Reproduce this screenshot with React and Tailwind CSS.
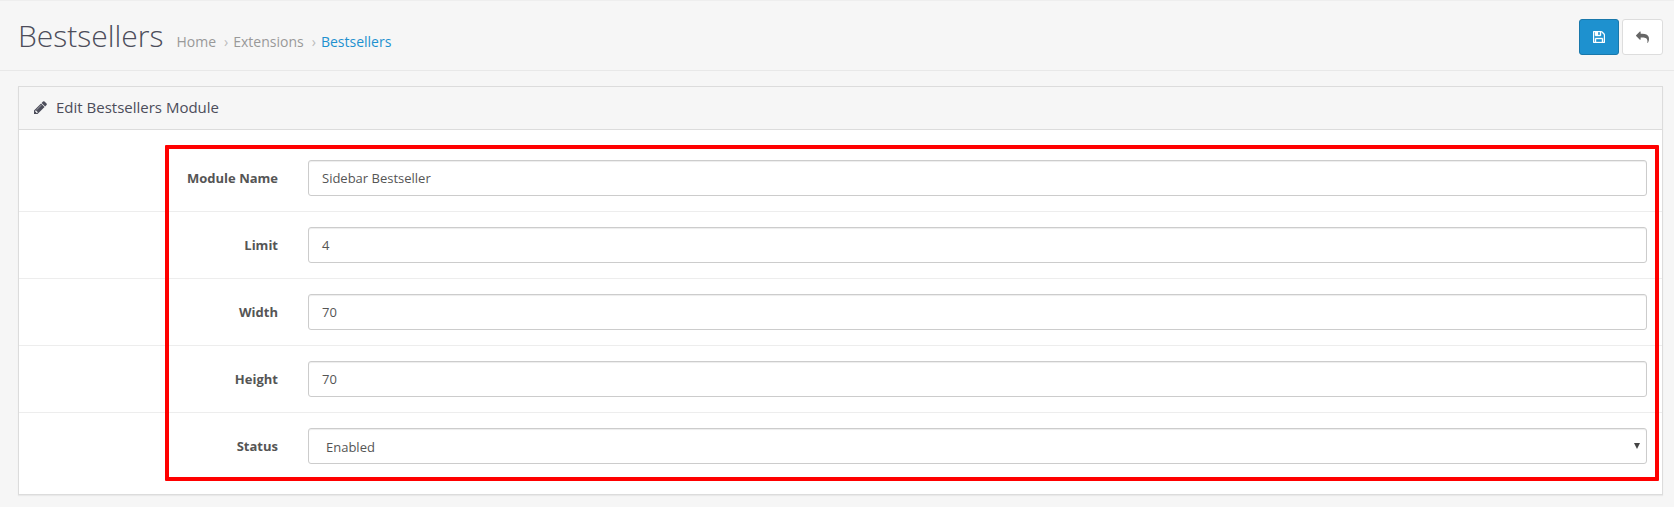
import React from "react";

const rows = [
  { label: "Module Name", value: "Sidebar Bestseller" },
  { label: "Limit", value: "4" },
  { label: "Width", value: "70" },
  { label: "Height", value: "70" },
  { label: "Status", value: "Enabled", select: true },
];

function SaveIcon() {
  return (
    <svg
      className="h-3 w-3"
      viewBox="0 128 1536 1536"
      fill="currentColor"
      stroke="currentColor"
      strokeWidth="50"
    >
      <path d="M384 1536h768v-384h-768v384zM1280 1536h128v-896q0-14-10-38.500t-20-34.500l-281-281q-10-10-34-20t-39-10v416q0 40-28 68t-68 28h-576q-40 0-68-28t-28-68v-416h-128v1280h128v-416q0-40 28-68t68-28h832q40 0 68 28t28 68v416zM896 608v-320q0-13-9.500-22.500t-22.500-9.500h-192q-13 0-22.500 9.500t-9.500 22.500v320q0 13 9.500 22.500t22.500 9.500h192q13 0 22.500-9.500t9.500-22.500zM1536 640v928q0 40-28 68t-68 28h-1344q-40 0-68-28t-28-68v-1344q0-40 28-68t68-28h928q40 0 88 20t76 48l280 280q28 28 48 76t20 88z" />
    </svg>
  );
}

function ReplyIcon() {
  return (
    <svg className="h-[13px] w-[13px] -scale-x-100" viewBox="0 0 1792 1792" fill="currentColor">
      <path d="M1792 640q0 26-19 45l-512 512q-19 19-45 19t-45-19-19-45v-256h-224q-98 0-175.500 6t-154 21.500-133 42.500-105.500 69.500-80 101-48.500 138.500-17.500 181q0 55 5 123 0 6 2.500 23.500t2.500 26.500q0 15-8.500 25t-23.500 10q-16 0-28-17-7-9-13-22t-13.500-30-10.500-24q-127-285-127-451 0-199 53-333 162-403 875-403h224v-256q0-26 19-45t45-19 45 19l512 512q19 19 19 45z" />
    </svg>
  );
}

function PencilIcon() {
  return (
    <svg className="mb-px h-[13px] w-[13px]" viewBox="0 128 1536 1536" fill="currentColor">
      <path d="M363 1536l91-91-235-235-91 91v107h128v128h107zM886 608q0-22-22-22-10 0-17 7l-542 542q-7 7-7 17 0 22 22 22 10 0 17-7l542-542q7-7 7-17zM832 416l416 416-832 832h-416v-416zM1515 512q0 53-37 90l-166 166-416-416 166-165q36-38 90-38 53 0 91 38l235 234q37 39 37 91z" />
    </svg>
  );
}

export default function App() {
  return (
    <div className="relative h-[507px] w-[1674px] overflow-hidden border-t border-[#eeeeee] bg-[#f6f6f6] font-['Open_Sans',sans-serif] text-[13px] text-[#555555]">
      <header className="flex h-[70px] items-start justify-between border-b border-[#e8e8e8] pr-[11px] pl-[18px]">
        <div className="flex items-baseline pt-[13px]">
          <h1 className="text-[30px] leading-[44px] font-light text-[#4c4d5a]">Bestsellers</h1>
          <nav className="ml-[13px] flex items-baseline text-[14px] text-[#999999]">
            <span>Home</span>
            <span className="mr-[5px] ml-[8px] text-[#bbbbbb]">›</span>
            <span>Extensions</span>
            <span className="mr-[5px] ml-[8px] text-[#bbbbbb]">›</span>
            <span className="text-[#1e91cf]">Bestsellers</span>
          </nav>
        </div>
        <div className="flex gap-[3px] pt-[18px]">
          <button className="flex h-9 w-10 items-center justify-center rounded-[3px] border border-[#1978ab] bg-[#1e91cf] text-white">
            <SaveIcon />
          </button>
          <button className="flex h-9 w-[41px] items-center justify-center rounded-[3px] border border-[#dddddd] bg-white text-[#666666]">
            <ReplyIcon />
          </button>
        </div>
      </header>
      <section className="mt-[15px] mr-[11px] ml-[18px] border border-[#dcdcdc] bg-white shadow-[0_1px_1px_rgba(0,0,0,0.05)]">
        <div className="flex h-[43px] items-center border-b border-[#dcdcdc] bg-[#f6f6f6] pl-[15px] text-[15px] text-[#4c4d5a]">
          <PencilIcon />
          <h3 className="ml-[9px] pb-[2px]">Edit Bestsellers Module</h3>
        </div>
        <form className="py-[15px]">
          {rows.map((row, i) => (
            <div
              key={row.label}
              className={
                "flex items-center py-[15px] pr-[15px]" + (i > 0 ? " border-t border-[#ededed]" : "")
              }
            >
              <label className="w-[259px] pt-[2px] text-right font-bold">{row.label}</label>
              <div
                className={
                  "ml-[30px] flex h-9 flex-1 items-center justify-between rounded-[3px] border border-[#cccccc] bg-white shadow-[inset_0_1px_1px_rgba(0,0,0,0.075)] " +
                  (row.select ? "pr-[6px] pl-[17px]" : "pl-[13px]")
                }
              >
                <span className={row.select ? "pt-[3px]" : "pt-[2px]"}>{row.value}</span>
                {row.select && (
                  <svg className="mb-px h-[6px] w-[6px]" viewBox="0 0 6 6" fill="#444444">
                    <path d="M0 0h6L3 6z" />
                  </svg>
                )}
              </div>
            </div>
          ))}
        </form>
      </section>
      <div className="pointer-events-none absolute top-[144px] left-[165px] h-[336px] w-[1494px] rounded-[1px] border-4 border-[#ff0000]" />
    </div>
  );
}
